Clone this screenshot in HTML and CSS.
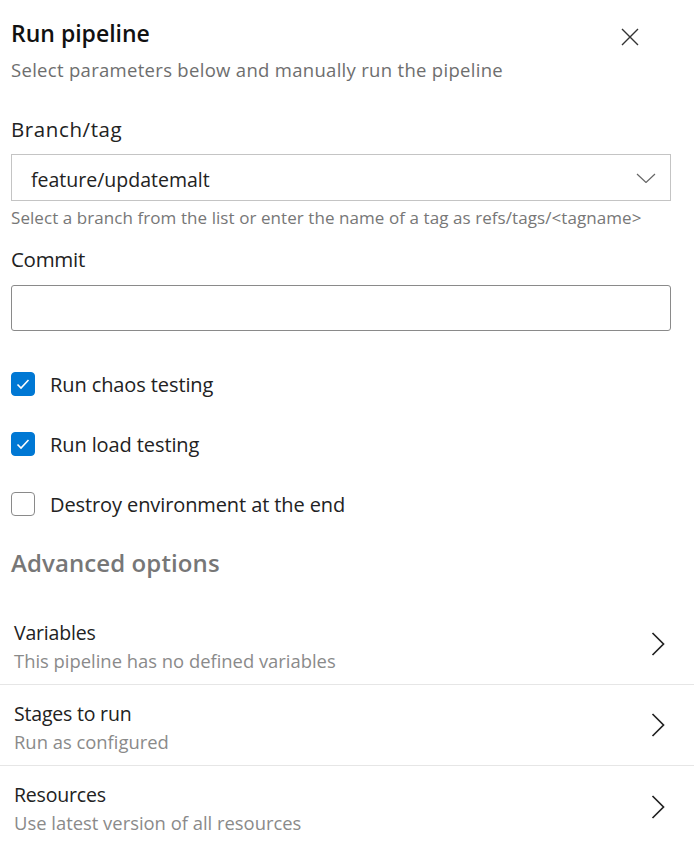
FILE: index.html
```html
<!DOCTYPE html>
<html lang="en">
<head>
<meta charset="utf-8">
<title>Run pipeline</title>
<link rel="stylesheet" href="styles.css">
</head>
<body>
<div class="panel">
  <header class="head">
    <div class="head-text">
      <h1 class="title">Run pipeline</h1>
      <p class="subtitle">Select parameters below and manually run the pipeline</p>
    </div>
    <button class="close" aria-label="Close">
      <svg width="18" height="18" viewBox="0 0 18 18"><path d="M1 1 L17 17 M17 1 L1 17" stroke="#333" stroke-width="1.4" fill="none"/></svg>
    </button>
  </header>

  <div class="field">
    <label class="label label-wide">Branch/tag</label>
    <div class="dropdown">
      <span class="dropdown-value">feature/updatemalt</span>
      <svg class="dd-chevron" width="20" height="10" viewBox="0 0 20 10"><path d="M1 1 L10 9.5 L19 1" stroke="#666" stroke-width="1.2" fill="none"/></svg>
    </div>
    <div class="help">Select a branch from the list or enter the name of a tag as refs/tags/&lt;tagname&gt;</div>
  </div>

  <div class="field commit-field">
    <label class="label">Commit</label>
    <div class="textbox"></div>
  </div>

  <div class="checks">
    <div class="check">
      <span class="box checked"><svg width="14" height="12" viewBox="0 0 14 12"><path d="M1.5 6.5 L5 10 L12.5 2" stroke="#fff" stroke-width="1.6" fill="none"/></svg></span>
      <span class="check-label">Run chaos testing</span>
    </div>
    <div class="check">
      <span class="box checked"><svg width="14" height="12" viewBox="0 0 14 12"><path d="M1.5 6.5 L5 10 L12.5 2" stroke="#fff" stroke-width="1.6" fill="none"/></svg></span>
      <span class="check-label">Run load testing</span>
    </div>
    <div class="check">
      <span class="box"></span>
      <span class="check-label">Destroy environment at the end</span>
    </div>
  </div>

  <h2 class="section">Advanced options</h2>

  <div class="rows">
    <div class="row">
      <div class="row-text">
        <div class="row-title">Variables</div>
        <div class="row-sub">This pipeline has no defined variables</div>
      </div>
      <svg class="row-chevron" width="14" height="24" viewBox="0 0 14 24"><path d="M1.5 1 L12.5 12 L1.5 23" stroke="#222" stroke-width="1.7" fill="none"/></svg>
    </div>
    <div class="row">
      <div class="row-text">
        <div class="row-title">Stages to run</div>
        <div class="row-sub">Run as configured</div>
      </div>
      <svg class="row-chevron" width="14" height="24" viewBox="0 0 14 24"><path d="M1.5 1 L12.5 12 L1.5 23" stroke="#222" stroke-width="1.7" fill="none"/></svg>
    </div>
    <div class="row last">
      <div class="row-text">
        <div class="row-title">Resources</div>
        <div class="row-sub">Use latest version of all resources</div>
      </div>
      <svg class="row-chevron" width="14" height="24" viewBox="0 0 14 24"><path d="M1.5 1 L12.5 12 L1.5 23" stroke="#222" stroke-width="1.7" fill="none"/></svg>
    </div>
  </div>
</div>
</body>
</html>
```
FILE: styles.css
```css
* { box-sizing: border-box; }
html, body { margin: 0; padding: 0; background: #fff; }
body {
  font-family: "Open Sans", "Noto Sans", sans-serif;
  color: #201f1e;
}
.panel { width: 694px; padding: 0 23px 0 11px; }
.head { display: flex; justify-content: space-between; align-items: flex-start; padding-top: 18px; }
.title { margin: 0; font-size: 23px; font-weight: 600; line-height: 30px; color: #111; }
.subtitle { margin: 9px 0 0; font-size: 18.5px; line-height: 26px; color: #6e6e6e; letter-spacing: 0.3px; }
.close { border: 0; background: none; padding: 0; margin: 10px 32px 0 0; width: 18px; height: 18px; display: flex; }
.field { margin-top: 32px; }
.label { display: block; font-size: 20.5px; line-height: 28px; color: #222; letter-spacing: -0.3px; }
.label-wide { letter-spacing: 0.6px; }
.dropdown {
  margin-top: 11px; height: 47px; border: 1px solid #c4c4c4; display: flex; align-items: center;
  justify-content: space-between; padding: 3px 14px 0 19px;
}
.dd-chevron { margin-top: -3px; }
.dropdown-value { font-size: 19.5px; color: #222; }
.help { margin-top: 6px; font-size: 17px; line-height: 22px; color: #777; letter-spacing: 0.07px; }
.commit-field { margin-top: 16px; }
.textbox { margin-top: 12px; height: 46px; border: 1px solid #8a8a8a; border-radius: 3px; }
.checks { margin-top: 41px; display: flex; flex-direction: column; gap: 36px; }
.check { display: flex; align-items: center; gap: 15px; height: 24px; }
.box { width: 24px; height: 24px; border-radius: 4px; border: 1px solid #8a8a8a; display: flex; align-items: center; justify-content: center; background: #fff; }
.box.checked { background: #0078d4; border-color: #0078d4; }
.check-label { font-size: 20px; color: #222; letter-spacing: -0.1px; }
.section { margin: 31px 0 0; font-size: 24px; line-height: 32px; font-weight: 600; color: #777; letter-spacing: 0.1px; }
.rows { margin: 25px -23px 0 -11px; }
.row { display: flex; align-items: center; justify-content: space-between; height: 81px; padding: 4px 29px 0 14px; border-bottom: 1px solid #e6e6e6; }
.row.last { border-bottom: 0; }
.row-chevron { margin-top: -4px; }
.row-title { font-size: 19.5px; line-height: 26px; color: #222; letter-spacing: -0.2px; }
.row-sub { margin-top: 3px; font-size: 18.4px; line-height: 24px; color: #8a8a8a; letter-spacing: 0; }
```
